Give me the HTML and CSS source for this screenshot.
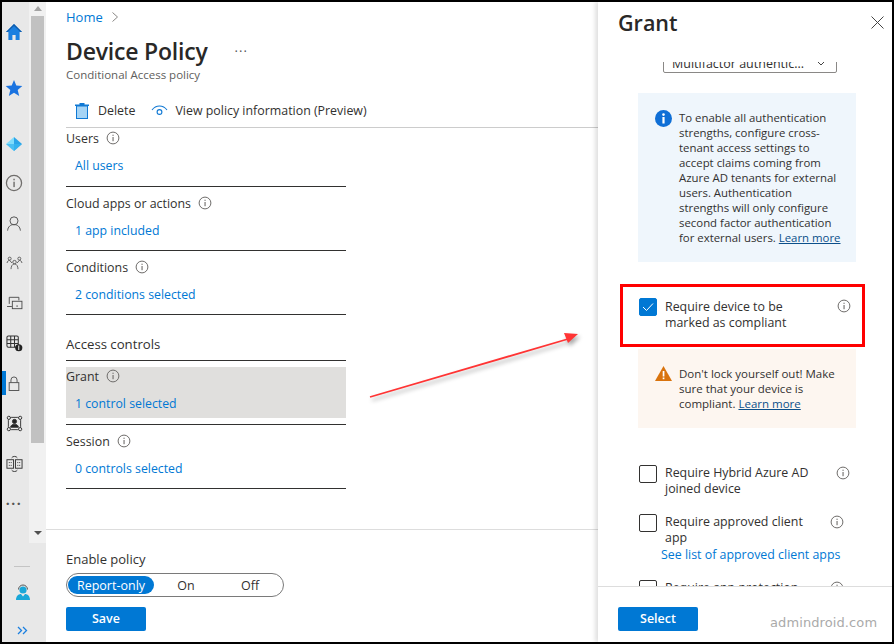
FILE: index.html
```html
<!DOCTYPE html>
<html lang="en">
<head>
<meta charset="utf-8">
<title>Device Policy</title>
<link rel="stylesheet" href="styles.css">
</head>
<body>
<svg class="sprite" aria-hidden="true">
  <symbol id="info" viewBox="0 0 14 14">
    <circle cx="7" cy="7" r="5.9" fill="none" stroke="#6f6d6b" stroke-width="1"/>
    <rect x="6.5" y="6" width="1.1" height="4.2" fill="#6f6d6b"/>
    <rect x="6.5" y="3.7" width="1.1" height="1.2" fill="#6f6d6b"/>
  </symbol>
</svg>
<div class="frame">
  <aside class="side">
    <div class="side-top">
      <nav class="rail">
        <span class="rail-item home"><svg width="18" height="18" viewBox="0 0 18 18"><path d="M9 1 1 9h2.4v8h4v-5h3.2v5h4V9H17z" fill="#1a7fe0"/><path d="M9 1 1 9h1.6L9 3l6.400 6H17z" fill="#0f5cab"/></svg></span>
        <span class="rail-item star"><svg width="18" height="18" viewBox="0 0 18 18"><path d="m9 1 2.300 5.500 6 .5-4.600 3.900 1.500 6L9 13.700 3.800 16.900l1.500-6L.7 7l6-.5z" fill="#1a73e0"/></svg></span>
        <span class="rail-item diamond"><svg width="18" height="16" viewBox="0 0 18 16"><path d="M9 1 17 8 9 15z" fill="#2aa4e8"/><path d="M9 1 1 8l8 7z" fill="#7fdcfb"/><path d="M1 8h16l-8 7z" fill="#38b6f0" opacity=".75"/></svg></span>
        <span class="rail-item info-row"><svg width="18" height="18"><use href="#info"/></svg></span>
        <span class="rail-item"><svg width="16" height="17" viewBox="0 0 18 18" fill="none" stroke="#555" stroke-width="1.100"><circle cx="9" cy="6" r="4.500"/><path d="M1.800 17c.4-4.500 3.300-6.800 7.200-6.800s6.800 2.300 7.200 6.800"/></svg></span>
        <span class="rail-item"><svg width="17" height="14" viewBox="0 0 18 16" fill="none" stroke="#555" stroke-width="1"><circle cx="3.500" cy="3" r="1.700"/><circle cx="14.500" cy="3" r="1.700"/><circle cx="9" cy="7" r="2"/><path d="M.5 8c.3-2 1.400-3 3-3l2.500 3M17.500 8c-.3-2-1.400-3-3-3L12 8M5 15c0-3 1.500-6 4-6s4 3 4 6"/></svg></span>
        <span class="rail-item"><svg width="17" height="14" viewBox="0 0 18 16" fill="none" stroke="#444" stroke-width="1"><path d="M3 9V1.500h11V5M.5 12h5.500"/><rect x="6.500" y="6" width="11" height="8.500"/><rect x="11" y="11" width="2" height="1" fill="#444" stroke="none"/></svg></span>
        <span class="rail-item"><svg width="17" height="17" viewBox="0 0 18 18" fill="none" stroke="#333" stroke-width="1.100"><rect x="1" y="1" width="12" height="12" rx="1.500"/><path d="M1 5h12M1 9h12M5 1v12M9 1v12"/><circle cx="13.500" cy="13.500" r="3.800" fill="#222" stroke="none"/><path d="M13.500 11v5" stroke="#e8e8e8"/></svg></span>
        <span class="rail-item active"><svg width="14" height="17" viewBox="0 0 16 18" fill="none" stroke="#555" stroke-width="1.100"><rect x="2.500" y="8" width="11" height="9"/><path d="M4.500 8V5a3.500 3.500 0 0 1 7 0v3"/></svg></span>
        <span class="rail-item"><svg width="17" height="17" viewBox="0 0 18 18" fill="none" stroke="#333" stroke-width="1"><rect x="2.500" y="2.500" width="13" height="13" rx="3"/><circle cx="3" cy="3" r="1.700" fill="#e8e8e8"/><circle cx="15" cy="3" r="1.700" fill="#e8e8e8"/><circle cx="3" cy="15" r="1.700" fill="#e8e8e8"/><circle cx="15" cy="15" r="1.700" fill="#e8e8e8"/><circle cx="9" cy="6.800" r="2.200" fill="#222"/><path d="M4.800 13c.4-2.200 2-3.200 4.200-3.200s3.800 1 4.200 3.200z" fill="#222"/></svg></span>
        <span class="rail-item"><svg width="17" height="17" viewBox="0 0 18 18" fill="none" stroke="#333" stroke-width="1"><rect x="1" y="5" width="7" height="9"/><rect x="10" y="5" width="7" height="9"/><path d="M3 8h1M5 8h1M3 11h1M5 11h1M12 8h1M14 8h1M12 11h1M14 11h1M6 3c1-2 5-2 6 0M6 16c1 2 5 2 6 0"/></svg></span>
        <span class="rail-item dots">...</span>
      </nav>
      <div class="scrollbar">
        <span class="arrow-up"></span>
        <span class="thumb"></span>
        <span class="arrow-down"></span>
      </div>
    </div>
    <div class="side-foot">
      <span class="sep"></span>
      <span class="agent"><svg width="16" height="18" viewBox="0 0 16 18"><path d="M3.500 6.500a4.500 4.500 0 0 1 9 0" fill="none" stroke="#555" stroke-width="1"/><circle cx="8" cy="7" r="3.600" fill="#19a7d8"/><path d="M1 17c0-4 2.500-6 5-6l2 2.500L10 11c2.500 0 5 2 5 6z" fill="#19a7d8"/></svg></span>
      <span class="expand"><svg width="11" height="9" viewBox="0 0 11 9" fill="none" stroke="#1a7fe0" stroke-width="1.300"><path d="m1 1 3.500 3.500L1 8M6 1l3.500 3.500L6 8"/></svg></span>
    </div>
  </aside>

  <main class="main">
    <div class="crumb"><a class="link">Home</a><svg width="8" height="12" viewBox="0 0 8 12" fill="none" stroke="#8a8886"><path d="m1.500 1.500 5 4.500-5 4.500"/></svg></div>
    <div class="title-row"><h1>Device Policy</h1><span class="more">···</span></div>
    <p class="subtitle">Conditional Access policy</p>
    <div class="toolbar">
      <span class="tool"><svg width="14" height="16" viewBox="0 0 14 16"><rect x="1.500" y="3" width="11" height="12.500" fill="#a6d4f5" stroke="#0f78d4"/><rect x="0" y="1.500" width="14" height="1.500" fill="#0f78d4"/><rect x="4.500" y="0" width="5" height="2" fill="#0f78d4"/></svg>Delete</span>
      <span class="tool eye"><svg width="17" height="11" viewBox="0 0 17 11" fill="none" stroke="#0f78d4" stroke-width="1.100"><path d="M1 5C3 2.300 5.500 1 8.500 1S14 2.300 16 5"/><circle cx="8.500" cy="7" r="2.400"/></svg>View policy information (Preview)</span>
    </div>
    <div class="policy">
      <section class="sec first"><div class="label">Users <svg class="inf" width="14" height="14"><use href="#info"/></svg></div><a class="link val">All users</a></section>
      <section class="sec"><div class="label">Cloud apps or actions <svg class="inf" width="14" height="14"><use href="#info"/></svg></div><a class="link val">1 app included</a></section>
      <section class="sec"><div class="label">Conditions <svg class="inf" width="14" height="14"><use href="#info"/></svg></div><a class="link val">2 conditions selected</a></section>
      <div class="group">Access controls</div>
      <section class="sec grant"><div class="grant-bg"><div class="label">Grant <svg class="inf" width="14" height="14"><use href="#info"/></svg></div><a class="link val">1 control selected</a></div></section>
      <section class="sec"><div class="label">Session <svg class="inf" width="14" height="14"><use href="#info"/></svg></div><a class="link val">0 controls selected</a></section>
    </div>
    <div class="main-foot">
      <div class="enable">Enable policy</div>
      <div class="toggle"><span class="opt on">Report-only</span><span class="opt mid">On</span><span class="opt">Off</span></div>
      <button class="btn">Save</button>
    </div>
  </main>

  <aside class="panel">
    <header class="panel-head">
      <h2>Grant</h2>
      <svg width="13" height="13" viewBox="0 0 13 13" fill="none" stroke="#444" stroke-width="1"><path d="m.5.5 12 12M12.500.5l-12 12"/></svg>
    </header>
    <div class="panel-body">
      <div class="select"><span>Multifactor authentic...</span><svg width="8" height="5" viewBox="0 0 8 5" fill="none" stroke="#444"><path d="m.5.500 3.500 3.500L7.500.5"/></svg></div>
      <div class="msg msg-info">
        <svg class="msg-icon" width="17" height="17" viewBox="0 0 17 17"><circle cx="8.500" cy="8.500" r="8.500" fill="#0f6fd6"/><rect x="7.400" y="7" width="2.200" height="6.500" fill="#fff"/><circle cx="8.500" cy="4.600" r="1.300" fill="#fff"/></svg>
        <p>To enable all authentication strengths, configure cross-tenant access settings to accept claims coming from Azure AD tenants for external users. Authentication strengths will only configure second factor authentication for external users. <a class="learn">Learn more</a></p>
      </div>
      <div class="opt-row hl">
        <span class="check checked"><svg width="12" height="10" viewBox="0 0 12 10" fill="none" stroke="#fff" stroke-width="1"><path d="m1 5 3.500 3.500L11 1.500"/></svg></span>
        <span class="opt-text hl-text">Require device to be marked as compliant</span>
        <svg class="hl-inf" width="14" height="14"><use href="#info"/></svg>
      </div>
      <div class="msg msg-warn">
        <svg class="msg-icon" width="17" height="15" viewBox="0 0 17 15"><path d="M8.500 0 17 15H0z" fill="#d9730d"/><rect x="7.700" y="5" width="1.700" height="5.500" fill="#fff"/><rect x="7.700" y="11.500" width="1.700" height="1.700" fill="#fff"/></svg>
        <p>Don't lock yourself out! Make sure that your device is compliant. <a class="learn">Learn more</a></p>
      </div>
      <div class="opt-row hybrid">
        <span class="check"></span>
        <span class="opt-text t1">Require Hybrid Azure AD joined device</span>
        <svg class="r-inf" width="14" height="14"><use href="#info"/></svg>
      </div>
      <div class="opt-row approved">
        <span class="check"></span>
        <span class="opt-text t2">Require approved client app</span>
        <svg class="r-inf" width="14" height="14"><use href="#info"/></svg>
      </div>
      <a class="link see">See list of approved client apps</a>
      <div class="opt-row protection">
        <span class="check"></span>
        <span class="opt-text t2">Require app protection policy</span>
        <svg class="r-inf" width="14" height="14"><use href="#info"/></svg>
      </div>
    </div>
    <footer class="panel-foot"><button class="btn">Select</button></footer>
  </aside>

  <svg class="arrow" width="230" height="90" viewBox="360 320 230 90">
    <path d="M370 397 568 339" stroke="#ff3434" stroke-width="1.800" fill="none"/>
    <path d="M578 334 564 333 568 343z" fill="#ff3434"/>
  </svg>
  <span class="mark">admindroid.com</span>
</div>
</body>
</html>
```

FILE: styles.css
```css
* { box-sizing: border-box; }
html, body { margin: 0; padding: 0; }
body { font-family: "Open Sans", "Noto Sans", sans-serif; font-size: 12px; color: #323130; background: #000; }
.sprite { display: none; }
p, h1, h2 { margin: 0; }
.frame { position: relative; width: 894px; height: 644px; border: 2px solid #000; display: flex; background: #fff; overflow: hidden; }

.side { width: 44px; flex: none; display: flex; flex-direction: column; background: #e8e8e8; }
.side-top { height: 541px; display: flex; }
.rail { width: 27px; display: flex; flex-direction: column; padding-top: 10px; }
.rail-item { position: relative; height: 40px; display: flex; align-items: center; justify-content: center; flex: none; padding-right: 3px; }
.rail-item.star { margin-top: 16px; }
.rail-item.diamond { margin-top: 16px; }
.rail-item.info-row { margin-top: -1px; }
.rail-item.active::before { content: ""; position: absolute; left: 0; top: 8px; width: 4px; height: 24px; background: #0078d4; }
.dots { font-size: 14px; letter-spacing: 1.500px; color: #555; align-items: flex-start; padding-top: 7px; font-weight: 700; }
.scrollbar { width: 17px; background: #f1f1f1; display: flex; flex-direction: column; align-items: center; }
.arrow-up { flex: none; display: block; width: 0; border: 4px solid transparent; border-top: 0; border-bottom: 5px solid #a3a3a3; margin-top: 4px; margin-bottom: 5px; height: 0; }
.thumb { width: 13px; height: 427px; background: #c1c1c1; flex: none; }
.arrow-down { width: 0; height: 0; border: 4px solid transparent; border-bottom: 0; border-top: 4px solid #505050; margin-top: 88px; }
.side-foot { flex: 1; display: flex; flex-direction: column; align-items: center; padding-top: 23px; width: 44px; }
.sep { width: 16px; height: 1px; background: #c4c4c4; margin-left: -4px; }
.agent { margin-top: 16px; margin-left: -3px; height: 18px; display: block; }
.expand { margin-top: 25px; margin-left: -3px; height: 9px; display: flex; }

.main { width: 552px; flex: none; display: flex; flex-direction: column; }
.link { color: #0078d4; }
.crumb { height: 30px; padding-left: 20px; display: flex; align-items: center; gap: 8px; font-size: 13px; }
.title-row { height: 38px; padding-left: 20px; display: flex; align-items: center; }
h1 { font-size: 23px; font-weight: 600; letter-spacing: -.2px; color: #292827; line-height: 38px; }
.more { margin-left: 27px; font-size: 13px; color: #555; letter-spacing: 1px; }
.subtitle { padding-left: 20px; font-size: 11.500px; line-height: 16px; color: #605e5c; margin-top: -3px; }
.toolbar { height: 45px; margin-left: 20px; border-bottom: 1px solid #ccc; display: flex; align-items: center; padding: 11px 0 0 9px; gap: 16px; font-size: 12.400px; }
.tool { display: flex; align-items: center; gap: 9px; }
.tool.eye { gap: 7px; }
.policy { width: 280px; margin-left: 20px; }
.sec { height: 64px; padding-top: 6px; border-bottom: 1px solid #323130; }
.sec.first { height: 59px; padding-top: 0; }
.label { height: 20px; display: flex; align-items: center; gap: 7px; font-size: 12.400px; }
.inf { flex: none; }
.val { display: block; height: 20px; line-height: 20px; margin-top: 8px; padding-left: 9px; font-size: 12.300px; }
.group { height: 46px; padding-top: 19px; line-height: 20px; border-bottom: 1px solid #323130; font-size: 13.200px; }
.grant-bg { background: #e0dfdd; height: 51px; }
.grant-bg .label { height: 18px; }
.grant-bg .val { margin-top: 9px; }
.main-foot { margin-top: 40px; border-top: 1px solid #ddd; flex: 1; padding: 20px 0 0 20px; }
.enable { line-height: 18px; font-size: 13px; }
.toggle { margin-top: 5px; width: 218px; height: 24px; border: 1px solid #7a7a7a; border-radius: 12px; padding: 2px 1px; display: flex; font-size: 12.500px; }
.opt { display: flex; align-items: center; justify-content: center; height: 18px; flex: 1; }
.opt.on { flex: none; width: 86px; background: #0078d4; color: #fff; border-radius: 9px; }
.opt.mid { flex: none; width: 64px; }
.btn { display: block; width: 80px; height: 24px; border: 0; border-radius: 2px; background: #0078d4; color: #fff; font: 600 12.500px "Open Sans", sans-serif; margin-top: 10px; padding: 0 0 1px; }

.panel { width: 294px; flex: none; display: flex; flex-direction: column; background: #fff; box-shadow: -3px 0 4px rgba(0,0,0,.12); position: relative; }
.panel-head { height: 60px; padding: 4px 8px 24px 20px; display: flex; justify-content: space-between; align-items: center; flex: none; }
h2 { font-size: 21.500px; font-weight: 600; color: #292827; }
.panel-body { flex: 1; overflow: hidden; padding-left: 40px; position: relative; }
.select { width: 174px; height: 25px; margin: -14px 0 0 25px; border: 1px solid #8a8886; border-radius: 2px; display: flex; align-items: center; justify-content: space-between; padding: 5px 11px 0 8px; font-size: 12.500px; }
.msg { width: 218px; display: flex; gap: 7px; padding: 17px 10px 0 17px; font-size: 11.500px; line-height: 15px; }
.msg-icon { flex: none; }
.msg-info { margin-top: 20px; height: 169px; background: #eff6fc; font-size: 11.400px; padding-right: 14px; }
.msg-warn { margin-top: 2px; height: 79px; background: #fdf6f0; }
.learn { color: #0b4f8a; text-decoration: underline; white-space: nowrap; }
.opt-row { display: flex; position: relative; font-size: 12.400px; line-height: 16px; }
.opt-text { margin-left: 8px; }
.check { width: 18px; height: 18px; flex: none; border: 1px solid #323130; border-radius: 2px; display: flex; align-items: center; justify-content: center; }
.check.checked { background: #0078d4; border-color: #0078d4; }
.hl { width: 245px; height: 63px; margin: 22px 0 0 -18px; padding: 11px 0 0 16px; border: 3px solid #f00; }
.hl-text { width: 140px; padding-top: 1px; }
.hl-inf { position: absolute; left: 214px; top: 12px; }
.hybrid { margin: 37px 0 0 1px; height: 49px; }
.t1 { width: 150px; }
.t2 { width: 142px; }
.r-inf { position: absolute; top: 1px; left: 197px; }
.approved .r-inf, .protection .r-inf { left: 191px; }
.approved { height: 32px; margin-left: 1px; }
.see { display: block; margin: 0 0 0 23px; line-height: 16px; height: 33px; font-size: 12.400px; padding-top: 1px; }
.protection { margin: 1px 0 0 1px; }
.panel-foot { height: 56px; border-top: 1px solid #ddd; flex: none; padding: 10px 0 0 20px; }

.arrow { position: absolute; left: 358px; top: 318px; filter: drop-shadow(2px 3px 2px rgba(0,0,0,.35)); }
.mark { position: absolute; left: 768px; top: 613px; font-family: "DejaVu Sans", sans-serif; font-size: 13px; color: #aaa; letter-spacing: .1px; }
```
